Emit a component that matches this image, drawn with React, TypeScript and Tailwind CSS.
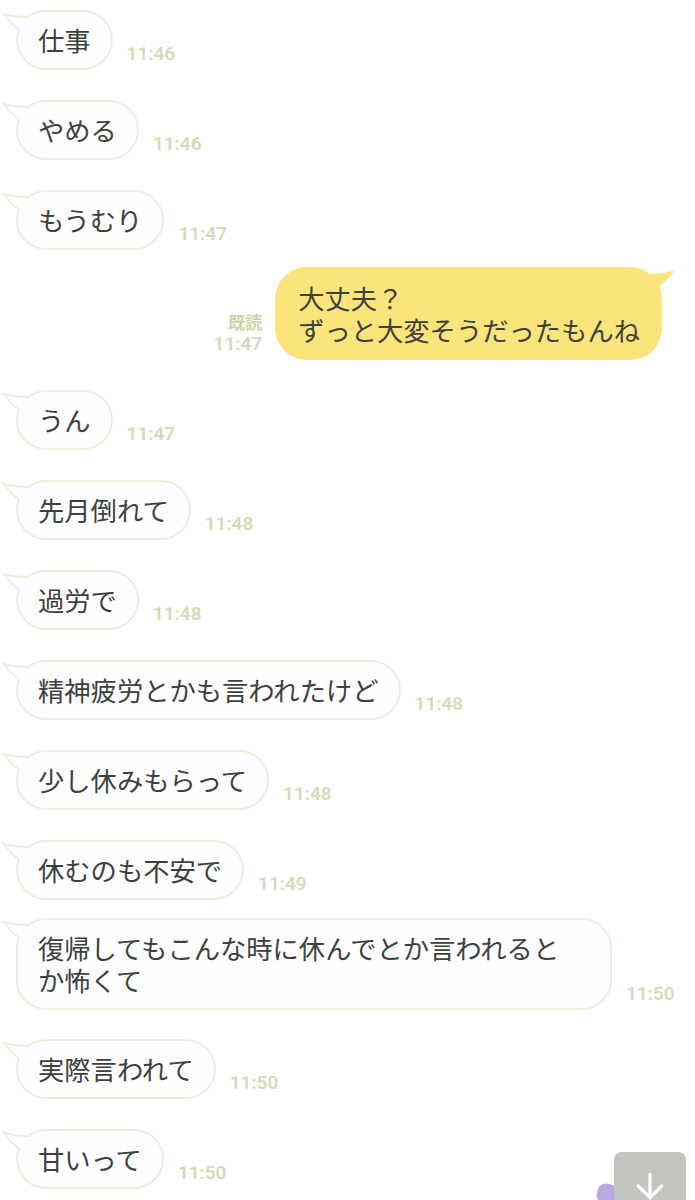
import { ArrowDown } from "lucide-react";

type Msg = {
  text: string;
  time: string;
  mine?: boolean;
  space: string;
  wide?: boolean;
};

const messages: Msg[] = [
  { text: "仕事", time: "11:46", space: "mt-[10px]" },
  { text: "やめる", time: "11:46", space: "mt-[30px]" },
  { text: "もうむり", time: "11:47", space: "mt-[30px]" },
  { text: "大丈夫？\nずっと大変そうだったもんね", time: "11:47", mine: true, space: "mt-[17px]" },
  { text: "うん", time: "11:47", space: "mt-[30px]" },
  { text: "先月倒れて", time: "11:48", space: "mt-[30px]" },
  { text: "過労で", time: "11:48", space: "mt-[30px]" },
  { text: "精神疲労とかも言われたけど", time: "11:48", space: "mt-[30px]" },
  { text: "少し休みもらって", time: "11:48", space: "mt-[30px]" },
  { text: "休むのも不安で", time: "11:49", space: "mt-[30px]" },
  { text: "復帰してもこんな時に休んでとか言われるとか怖くて", time: "11:50", space: "mt-[18px]", wide: true },
  { text: "実際言われて", time: "11:50", space: "mt-[29px]" },
  { text: "甘いって", time: "11:50", space: "mt-[30px]" },
];

const jp = { fontFamily: '"Noto Sans CJK JP", "Noto Sans", sans-serif' };
const num = { fontFamily: 'Roboto, "Noto Sans", sans-serif' };

// little hook at the top-left of incoming bubbles
function TailLeft() {
  return (
    <svg className="absolute -left-[16px] -top-[3px]" width="30" height="30" viewBox="0 0 30 30">
      <path d="M26 8 Q12 8 2 5 Q8 14 16.5 20 L26 20 Z" fill="#fefefe" />
      <path d="M26 8 Q12 8 2 5 Q8 14 16.5 20" fill="none" stroke="#efeede" strokeWidth="2" />
    </svg>
  );
}

function TailRight() {
  return (
    <svg className="absolute -right-[14px] -top-[1px]" width="30" height="30" viewBox="0 0 30 30">
      <path d="M4 8 Q18 8 29 4 Q22 14 13.5 20 L4 20 Z" fill="#fbe47c" />
    </svg>
  );
}

function Incoming({ m }: { m: Msg }) {
  return (
    <div className={`flex items-end pl-4 ${m.space}`}>
      <div
        className={`relative rounded-[30px] border-2 border-[#efeede] bg-[#fefefe] py-[12px] text-[26.3px] leading-[32px] text-[#3c413c] whitespace-pre-wrap ${
          m.wide ? "w-[596px] pl-[20px] pr-[34px]" : "px-[20px]"
        }`}
        style={jp}
      >
        <TailLeft />
        {m.text}
      </div>
      <span className="ml-[14px] mb-[6px] text-[19px] font-semibold leading-[20px] text-[#d3dcb4]" style={num}>
        {m.time}
      </span>
    </div>
  );
}

function Outgoing({ m }: { m: Msg }) {
  return (
    <div className={`flex items-end justify-end pr-[33px] ${m.space}`}>
      <div className="mr-[13px] mb-[6px] flex flex-col items-end">
        <span className="text-[17px] font-bold leading-[19px] text-[#c6d6a6]" style={jp}>
          既読
        </span>
        <span className="mt-[2px] text-[19px] font-semibold leading-[21px] text-[#d3dab8]" style={num}>
          {m.time}
        </span>
      </div>
      <div
        className="relative rounded-[32px] bg-[#fbe47c] pl-[23px] pr-[22px] pt-[15px] pb-[14px] text-[26.3px] leading-[32px] text-[#3c413c] whitespace-pre-wrap"
        style={jp}
      >
        <TailRight />
        {m.text}
      </div>
    </div>
  );
}

export default function App() {
  return (
    <div className="relative h-[1200px] w-[695px] overflow-hidden bg-white">
      <div className="flex flex-col">
        {messages.map((m, i) => (m.mine ? <Outgoing key={i} m={m} /> : <Incoming key={i} m={m} />))}
      </div>

      {/* scroll-to-bottom button, with the sticker peeking out behind it */}
      <div className="absolute left-[597px] top-[1184px] h-[20px] w-[22px] rotate-12 rounded-[40%] bg-[#b8a8e2]" />
      <div className="absolute left-[614px] top-[1152px] flex h-[64px] w-[72px] items-start justify-center rounded-[8px] bg-[#c2c5bf] pt-[14px]">
        <ArrowDown className="h-[40px] w-[40px] text-white" strokeWidth={2} />
      </div>
    </div>
  );
}
